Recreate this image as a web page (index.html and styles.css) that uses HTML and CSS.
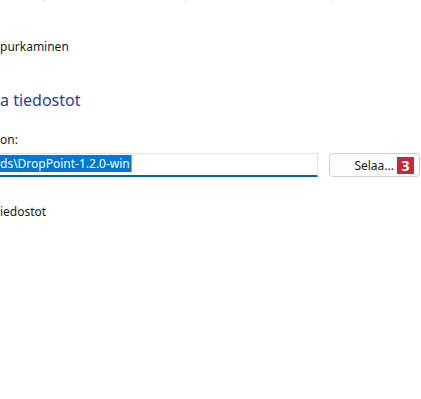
FILE: index.html
```html
<html lang="fi">
<head>
    <meta charset="UTF-8">
    <title>Pakattujen kansioiden purkaminen</title>
    <link rel="stylesheet" href="styles.css">
</head>
<body>
    <div class="ylapalkki">
        <span class="haalea h1">Pakattujen kansioiden</span>
        <span class="haalea h2">Kohde ja</span>
        <span class="haalea h3">Valmis purku</span>
    </div>

    <div class="otsikko">purkaminen</div>

    <h1 class="ohje">a tiedostot</h1>

    <div class="selite">on:</div>

    <div class="rivi">
        <div class="kentta">
            <span class="valittu">ds\DropPoint-1.2.0-win</span>
        </div>
        <button class="selaa">Selaa...<span class="merkki">3</span></button>
    </div>

    <div class="valinta">iedostot</div>
</body>
</html>
```
FILE: styles.css
```css
body {
    margin: 0;
    width: 421px;
    height: 399px;
    overflow: hidden;
    background-color: #fff;
    font-family: "Noto Sans", "Open Sans", sans-serif;
    font-size: 12px;
    color: #1a1a1a;
}
.ylapalkki {
    display: flex;
    height: 16px;
    margin-top: -13px;
    line-height: 16px;
}
.haalea {
    color: #ececec;
    white-space: nowrap;
}
.h1 {
    width: 145px;
}
.h2 {
    width: 145px;
}
.otsikko {
    margin-top: 36px;
    line-height: 16px;
}
.ohje {
    margin: 34px 0 0 0;
    font-size: 16px;
    font-weight: normal;
    line-height: 22px;
    color: #1f3f97;
}
.selite {
    margin-top: 21px;
    line-height: 16px;
}
.rivi {
    display: flex;
    gap: 11px;
    margin-top: 5px;
}
.kentta {
    box-sizing: border-box;
    width: 318px;
    height: 24px;
    border: 1px solid #e2e2e2;
    border-left: none;
    border-bottom: 2px solid #0067c0;
    padding-top: 1px;
}
.valittu {
    display: inline-block;
    height: 17px;
    line-height: 17px;
    padding-right: 1px;
    background-color: #0078d7;
    color: #fff;
    border-right: 1px solid #f08a24;
}
.selaa {
    box-sizing: border-box;
    width: 91px;
    height: 24px;
    padding: 0 5px 0 0;
    display: flex;
    align-items: center;
    justify-content: flex-end;
    gap: 3px;
    font-family: inherit;
    font-size: 12px;
    color: #1a1a1a;
    background-color: #fdfdfd;
    border: 1px solid #d0d0d0;
    border-radius: 4px;
}
.merkki {
    display: inline-block;
    width: 17px;
    height: 17px;
    line-height: 17px;
    text-align: center;
    background-color: #c8283a;
    color: #fff;
    font-weight: bold;
    font-size: 14px;
}
.valinta {
    margin-top: 27px;
    line-height: 16px;
}
```
